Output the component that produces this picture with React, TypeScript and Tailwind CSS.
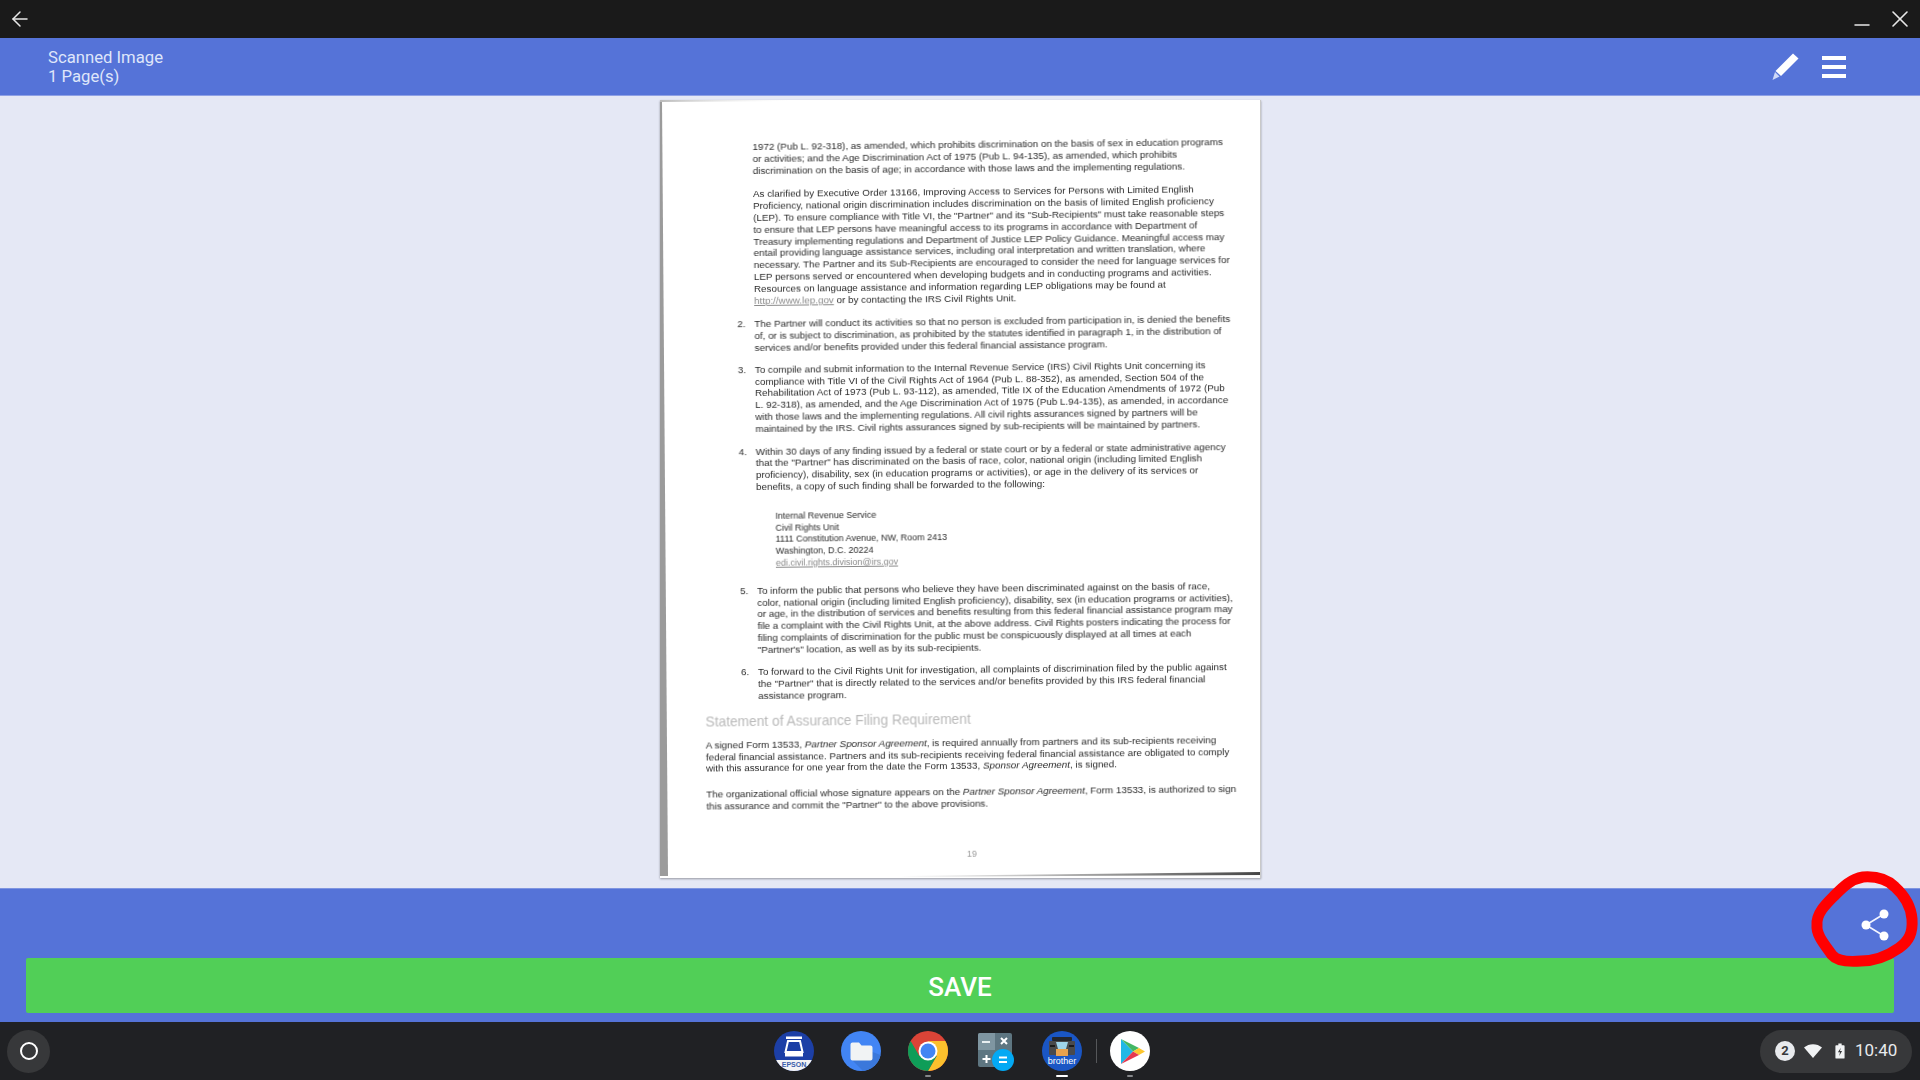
import React from "react"
import { ArrowLeft, X, Minus } from "lucide-react"

const Line = ({ children }: { children: React.ReactNode }) => (
  <div className="h-[11.8px] leading-[11.8px] whitespace-nowrap">{children}</div>
)

const Item = ({ n, top, lines }: { n: string; top: string; lines: string[] }) => (
  <div className={`relative ml-[53px] ${top}`}>
    <span className="absolute -left-[17px] top-0 leading-[11.8px]">{n}</span>
    {lines.map((l) => (
      <Line key={l}>{l}</Line>
    ))}
  </div>
)

const Document = () => (
  <div className="relative h-[778px] w-[601px] shrink-0 bg-white shadow-[0_1px_2px_rgba(0,0,0,0.35)]">
    <div className="origin-top-left -rotate-[0.6deg] pl-[39px] pt-[42px] font-['Liberation_Sans',sans-serif] text-[9.83px] text-[#2a2a2a] blur-[0.4px]">
      <div className="ml-[53px]">
        <Line>1972 (Pub L. 92-318), as amended, which prohibits discrimination on the basis of sex in education programs</Line>
        <Line>or activities; and the Age Discrimination Act of 1975 (Pub L. 94-135), as amended, which prohibits</Line>
        <Line>discrimination on the basis of age; in accordance with those laws and the implementing regulations.</Line>
      </div>
      <div className="ml-[53px] mt-[12px]">
        <Line>As clarified by Executive Order 13166, Improving Access to Services for Persons with Limited English</Line>
        <Line>Proficiency, national origin discrimination includes discrimination on the basis of limited English proficiency</Line>
        <Line>(LEP). To ensure compliance with Title VI, the "Partner" and its "Sub-Recipients" must take reasonable steps</Line>
        <Line>to ensure that LEP persons have meaningful access to its programs in accordance with Department of</Line>
        <Line>Treasury implementing regulations and Department of Justice LEP Policy Guidance. Meaningful access may</Line>
        <Line>entail providing language assistance services, including oral interpretation and written translation, where</Line>
        <Line>necessary. The Partner and its Sub-Recipients are encouraged to consider the need for language services for</Line>
        <Line>LEP persons served or encountered when developing budgets and in conducting programs and activities.</Line>
        <Line>Resources on language assistance and information regarding LEP obligations may be found at</Line>
        <Line>
          <span className="text-[#8a8a8a] underline">http://www.lep.gov</span> or by contacting the IRS Civil Rights Unit.
        </Line>
      </div>
      <Item
        n="2."
        top="mt-[12px]"
        lines={[
          "The Partner will conduct its activities so that no person is excluded from participation in, is denied the benefits",
          "of, or is subject to discrimination, as prohibited by the statutes identified in paragraph 1, in the distribution of",
          "services and/or benefits provided under this federal financial assistance program.",
        ]}
      />
      <Item
        n="3."
        top="mt-[10px]"
        lines={[
          "To compile and submit information to the Internal Revenue Service (IRS) Civil Rights Unit concerning its",
          "compliance with Title VI of the Civil Rights Act of 1964 (Pub L. 88-352), as amended, Section 504 of the",
          "Rehabilitation Act of 1973 (Pub L. 93-112), as amended, Title IX of the Education Amendments of 1972 (Pub",
          "L. 92-318), as amended, and the Age Discrimination Act of 1975 (Pub L.94-135), as amended, in accordance",
          "with those laws and the implementing regulations. All civil rights assurances signed by partners will be",
          "maintained by the IRS. Civil rights assurances signed by sub-recipients will be maintained by partners.",
        ]}
      />
      <Item
        n="4."
        top="mt-[11px]"
        lines={[
          "Within 30 days of any finding issued by a federal or state court or by a federal or state administrative agency",
          'that the "Partner" has discriminated on the basis of race, color, national origin (including limited English',
          "proficiency), disability, sex (in education programs or activities), or age in the delivery of its services or",
          "benefits, a copy of such finding shall be forwarded to the following:",
        ]}
      />
      <div className="ml-[72px] mt-[18px] text-[9px]">
        <Line>Internal Revenue Service</Line>
        <Line>Civil Rights Unit</Line>
        <Line>1111 Constitution Avenue, NW, Room 2413</Line>
        <Line>Washington, D.C. 20224</Line>
        <Line>
          <span className="text-[#8a8a8a] underline">edi.civil.rights.division@irs.gov</span>
        </Line>
      </div>
      <Item
        n="5."
        top="mt-[15px]"
        lines={[
          "To inform the public that persons who believe they have been discriminated against on the basis of race,",
          "color, national origin (including limited English proficiency), disability, sex (in education programs or activities),",
          "or age, in the distribution of services and benefits resulting from this federal financial assistance program may",
          "file a complaint with the Civil Rights Unit, at the above address. Civil Rights posters indicating the process for",
          "filing complaints of discrimination for the public must be conspicuously displayed at all times at each",
          '"Partner\'s" location, as well as by its sub-recipients.',
        ]}
      />
      <Item
        n="6."
        top="mt-[11px]"
        lines={[
          "To forward to the Civil Rights Unit for investigation, all complaints of discrimination filed by the public against",
          'the "Partner" that is directly related to the services and/or benefits provided by this IRS federal financial',
          "assistance program.",
        ]}
      />
      <div className="mt-[13px] h-[14px] text-[13.75px] leading-[14px] whitespace-nowrap text-[#b9b9b9]">
        Statement of Assurance Filing Requirement
      </div>
      <div className="mt-[10px]">
        <Line>
          A signed Form 13533, <i>Partner Sponsor Agreement</i>, is required annually from partners and its sub-recipients receiving
        </Line>
        <Line>federal financial assistance. Partners and its sub-recipients receiving federal financial assistance are obligated to comply</Line>
        <Line>
          with this assurance for one year from the date the Form 13533, <i>Sponsor Agreement</i>, is signed.
        </Line>
      </div>
      <div className="mt-[14px]">
        <Line>
          The organizational official whose signature appears on the <i>Partner Sponsor Agreement</i>, Form 13533, is authorized to sign
        </Line>
        <Line>this assurance and commit the "Partner" to the above provisions.</Line>
      </div>
      <div className="ml-[260px] mt-[38px] text-[9px] text-[#9a9a9a]">19</div>
    </div>
    {/* scanner shadow along the page edges */}
    <svg className="absolute inset-0 h-full w-full" viewBox="0 0 601 778">
      <defs>
        <linearGradient id="edge" x1="0" x2="1" y1="0" y2="0">
          <stop offset="0" stopColor="#555" stopOpacity="0" />
          <stop offset="1" stopColor="#444" />
        </linearGradient>
        <linearGradient id="topEdge" x1="0" x2="1" y1="0" y2="0">
          <stop offset="0" stopColor="#bbb" />
          <stop offset="1" stopColor="#eee" stopOpacity="0" />
        </linearGradient>
      </defs>
      <polygon points="0,0 2,0 8,776 0,776" fill="#9b9b9b" />
      <polygon points="0,0 130,0 130,1 0,2" fill="url(#topEdge)" />
      <polygon points="240,776 601,772 601,775 240,777" fill="url(#edge)" />
      <rect x="600" y="0" width="1" height="778" fill="#c9c9c9" />
    </svg>
  </div>
)

const Dock = () => (
  <div className="ml-[4px] flex items-center gap-[27px]">
    {/* epson */}
    <svg width="40" height="40" viewBox="0 0 40 40">
      <defs>
        <clipPath id="ep">
          <circle cx="20" cy="20" r="20" />
        </clipPath>
      </defs>
      <circle cx="20" cy="20" r="20" fill="#1c3fa6" />
      <g clipPath="url(#ep)">
        <rect x="0" y="29" width="40" height="11" fill="#f4f4f6" />
      </g>
      <rect x="12" y="5.500" width="16" height="2.500" fill="#fff" />
      <path d="M14 10h12l2.500 11h-17z" fill="none" stroke="#fff" strokeWidth="2" />
      <rect x="11" y="21.500" width="18" height="4" fill="#fff" />
      <text x="20" y="36" textAnchor="middle" fontSize="7" fontWeight="700" fontFamily="Liberation Sans" fill="#3b5dab">
        EPSON
      </text>
    </svg>
    {/* files */}
    <svg width="40" height="40" viewBox="0 0 40 40">
      <circle cx="20" cy="20" r="20" fill="#4285f4" />
      <path d="M10 28l12 11.900a20 20 0 0 0 17.500-15.900l-8-3z" fill="#3b78db" />
      <path d="M11.500 11.500h6.500l2.500 3h9a2 2 0 0 1 2 2v11a2 2 0 0 1-2 2h-18a2 2 0 0 1-2-2v-14a2 2 0 0 1 2-2z" fill="#f1f3f4" />
    </svg>
    {/* chrome */}
    <div className="relative">
      <svg width="40" height="40" viewBox="0 0 40 40">
        <circle cx="20" cy="20" r="20" fill="#db4437" />
        <path d="M37.320 10A20 20 0 0 1 20 40L28.660 25 20 10z" fill="#fbc02d" />
        <path d="M20 40A20 20 0 0 1 2.680 10L11.340 25h17.320z" fill="#0f9d58" />
        <circle cx="20" cy="20" r="9.500" fill="#fff" />
        <circle cx="20" cy="20" r="7.500" fill="#4285f4" />
      </svg>
      <div className="absolute -bottom-[6px] left-1/2 h-[2px] w-[6px] -translate-x-1/2 rounded-full bg-[#85878a]" />
    </div>
    {/* calculator */}
    <svg width="40" height="40" viewBox="0 0 40 40">
      <rect x="3" y="2" width="34" height="34" rx="2" fill="#5e7681" />
      <path d="M5 2h15v17H3V4a2 2 0 0 1 2-2z" fill="#7f96a1" />
      <rect x="7" y="10" width="8" height="2" fill="#e8eef0" />
      <path d="M26 7l6 6M32 7l-6 6" stroke="#fff" strokeWidth="2" />
      <path d="M7.500 28h8M11.500 24v8" stroke="#fff" strokeWidth="2" />
      <circle cx="28" cy="29" r="11" fill="#03a9f4" />
      <path d="M24 26.500h8M24 31h8" stroke="#fff" strokeWidth="2" />
    </svg>
    {/* brother */}
    <div className="relative">
      <svg width="40" height="40" viewBox="0 0 40 40">
        <circle cx="20" cy="20" r="20" fill="#1a56c4" />
        <rect x="10" y="6" width="20" height="4" rx="1" fill="#23262b" />
        <rect x="7" y="10" width="26" height="14" rx="1" fill="#4a4a4c" />
        <polygon points="14,11 26,11 24,18 16,18" fill="#9fd4ea" />
        <rect x="14" y="18" width="12" height="7" fill="#e9a24e" />
        <rect x="8" y="14" width="5" height="2" fill="#1b1b1b" />
        <rect x="27" y="14" width="5" height="2" fill="#1b1b1b" />
        <text x="20" y="33" textAnchor="middle" fontSize="9" fontFamily="Liberation Sans" fill="#fff">
          brother
        </text>
      </svg>
      <div className="absolute -bottom-[6px] left-1/2 h-[2px] w-[12px] -translate-x-1/2 rounded-full bg-white" />
    </div>
    <div className="-mx-[13.500px] h-[24px] w-px bg-[#55575a]" />
    {/* play */}
    <div className="relative">
      <svg width="40" height="40" viewBox="0 0 40 40">
        <circle cx="20" cy="20" r="20" fill="#fff" />
        <path d="M11 8v25l12-12.500z" fill="#22b8e6" />
        <path d="M11 8l18 9-6 3.500z" fill="#43b764" />
        <path d="M29 17l6 3.500-6 3.500-6-3.500z" fill="#fdc62f" />
        <path d="M11 33l18-9-6-3.500z" fill="#e53950" />
      </svg>
      <div className="absolute -bottom-[6px] left-1/2 h-[2px] w-[6px] -translate-x-1/2 rounded-full bg-[#85878a]" />
    </div>
  </div>
)

export default function App() {
  return (
    <div className="relative flex h-[1080px] w-[1920px] flex-col overflow-hidden bg-[#e5e8f5] font-['Roboto',sans-serif]">
      <div className="flex h-[38px] shrink-0 items-center justify-between bg-[#1a1a1a] pl-[8px] pr-[6px] text-[#e8e8e8]">
        <ArrowLeft size={24} strokeWidth={1.5} />
        <div className="flex items-center gap-[12px]">
          <Minus size={24} strokeWidth={1.5} className="translate-y-[6px]" />
          <X size={28} strokeWidth={1.4} />
        </div>
      </div>

      <div className="flex h-[58px] shrink-0 items-center justify-between border-b border-[#8ea0e5] bg-[#5573d8] pl-[48px] pr-[74px]">
        <div className="text-[16.700px] leading-[19px] text-[#dfe6fa]">
          <div>Scanned Image</div>
          <div>1 Page(s)</div>
        </div>
        <div className="flex items-center gap-[21px]">
          <svg className="-translate-y-px" width="30" height="30" viewBox="0 0 30 30">
            <path d="M22 2.500l5.500 5L10 25l-5.500-5z" fill="#fff" />
            <path d="M4 21l4.500 4.500L1.500 29z" fill="#cfd9f7" />
          </svg>
          <div className="flex w-[24px] flex-col gap-[5px]">
            <div className="h-[4px] bg-white" />
            <div className="h-[4px] bg-white" />
            <div className="h-[4px] bg-white" />
          </div>
        </div>
      </div>

      <div className="flex h-[792px] shrink-0 justify-center pt-[4px]">
        <Document />
      </div>

      <div className="flex h-[134px] shrink-0 flex-col border-t border-[#7f95e0] bg-[#5573d8]">
        <div className="flex h-[69px] items-center justify-end pr-[30px] pt-[3px]">
          <svg width="30" height="32" viewBox="0 0 30 32">
            <path d="M6 16L24 5M6 16l18 11" stroke="#f4f6ff" strokeWidth="1.500" />
            <circle cx="6" cy="16" r="4.500" fill="#fff" />
            <circle cx="24" cy="5" r="4.500" fill="#fff" />
            <circle cx="24" cy="27" r="4.500" fill="#fff" />
          </svg>
        </div>
        <div className="mx-[26px] flex h-[55px] items-center justify-center rounded-[2px] bg-[#51cf57] pt-[3px] text-[26px] font-medium text-white">
          SAVE
        </div>
      </div>

      <div className="grid h-[58px] shrink-0 grid-cols-[1fr_auto_1fr] items-center bg-[#202124] px-[7px]">
        <div>
          <div className="flex h-[43px] w-[43px] items-center justify-center rounded-full bg-[#37383a]">
            <div className="h-[18px] w-[18px] rounded-full border-2 border-white" />
          </div>
        </div>
        <Dock />
        <div className="flex justify-end pr-px">
          <div className="flex h-[43px] w-[152px] items-center rounded-full bg-[#37383a] pl-[15px] text-[#e8eaed]">
            <div className="flex h-[20px] w-[20px] items-center justify-center rounded-full bg-[#e8eaed] text-[13px] font-bold text-[#37383a]">
              2
            </div>
            <svg className="ml-[9px]" width="18" height="14" viewBox="0 0 18 14">
              <path d="M0 3.500C5 -1 13 -1 18 3.500L9 14z" fill="#f1f3f4" />
            </svg>
            <svg className="ml-[13px]" width="10" height="18" viewBox="0 0 12 18">
              <path d="M4 0h4v2h2.500a1 1 0 0 1 1 1v14a1 1 0 0 1-1 1h-9a1 1 0 0 1-1-1V3a1 1 0 0 1 1-1H4z" fill="#f1f3f4" />
              <path d="M7 5L3.500 10.500H6L5 15l3.500-6H6z" fill="#37383a" />
            </svg>
            <span className="ml-[10px] text-[17px]">10:40</span>
          </div>
        </div>
      </div>

      {/* hand drawn red ring on top of the screenshot */}
      <svg className="pointer-events-none absolute left-[1805px] top-[865px]" width="115" height="110" viewBox="0 0 115 110">
        <path
          d="M58 12C72 11 82 14 90 22C100 31 106 42 107 54C108 68 104 76 94 83C84 90 72 96 56 96C44 97 32 96 27 90C20 80 11 70 12 60C11 48 22 38 30 30C38 22 46 14 58 12Z"
          fill="none"
          stroke="#ff0000"
          strokeWidth="11"
        />
      </svg>
    </div>
  )
}
